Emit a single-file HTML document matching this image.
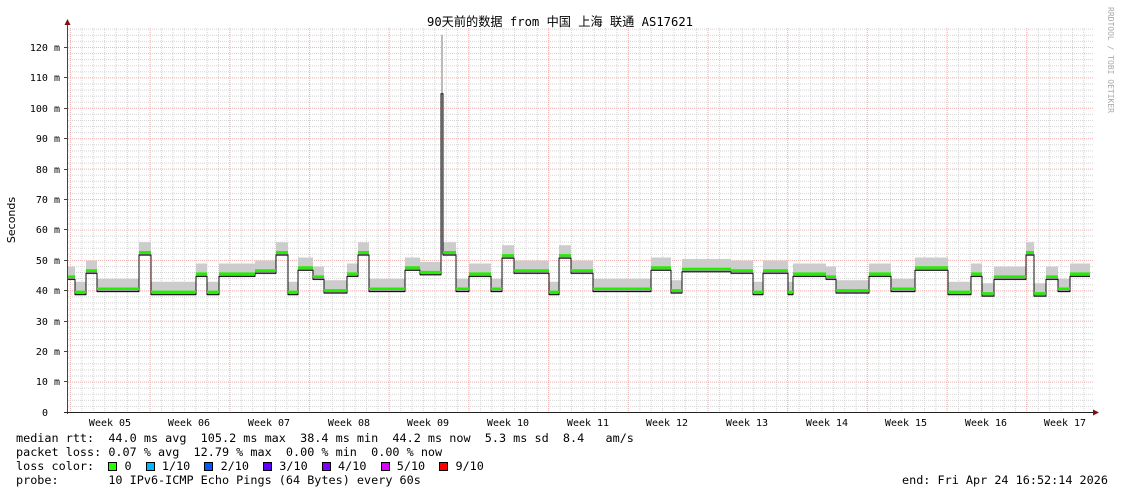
<!DOCTYPE html>
<html><head><meta charset="utf-8">
<style>
html,body{margin:0;padding:0;background:#fff;}
body{width:1121px;height:494px;overflow:hidden;position:relative;}
svg{position:absolute;left:0;top:0;}
.lg{position:absolute;left:16px;font-family:"DejaVu Sans Mono","Liberation Mono",monospace;font-size:11.8px;color:#000;white-space:pre;line-height:14px;}
.sq{display:inline-block;width:7px;height:7px;border:1px solid #000;vertical-align:-1px;}
</style></head><body>
<svg width="1121" height="494" xmlns="http://www.w3.org/2000/svg">
<defs>
<pattern id="vmin" x="70" y="0" width="11.386" height="4" patternUnits="userSpaceOnUse">
<rect x="0" y="0" width="1" height="1" fill="#d4d4d4"/><rect x="0" y="2" width="1" height="1" fill="#d4d4d4"/>
</pattern>
<pattern id="hmin" x="0" y="412" width="4" height="6.084" patternUnits="userSpaceOnUse">
<rect x="0" y="0" width="1" height="1" fill="#d4d4d4"/><rect x="2" y="0" width="1" height="1" fill="#d4d4d4"/>
</pattern>
<pattern id="vmaj" x="69.8" y="0" width="79.7" height="4" patternUnits="userSpaceOnUse">
<rect x="0" y="0" width="1" height="1" fill="#f4b4b4"/><rect x="0" y="2" width="1" height="1" fill="#f4b4b4"/>
</pattern>
<pattern id="hmaj" x="0" y="412" width="4" height="30.42" patternUnits="userSpaceOnUse">
<rect x="0" y="0" width="1" height="1" fill="#f4b4b4"/><rect x="2" y="0" width="1" height="1" fill="#f4b4b4"/>
</pattern>
</defs>
<rect x="68" y="27" width="1025" height="385" fill="url(#vmin)"/>
<rect x="68" y="27" width="1025" height="385" fill="url(#hmin)"/>
<rect x="68" y="27" width="1025" height="385" fill="url(#vmaj)"/>
<rect x="68" y="27" width="1025" height="385" fill="url(#hmaj)"/>
<g transform="translate(0,412) scale(1,-3.042)" fill="none" stroke-linejoin="miter">
<g transform="translate(0,2)">
<path vector-effect="non-scaling-stroke" stroke="#cccccc" stroke-width="11" d="M67,44 H75 M75,39 H86 M86,46 H97 M97,40 H139 M139,52 H151 M151,39 H196 M196,45 H207 M207,39 H219 M219,45 H255 M255,46 H276 M276,52 H288 M288,39 H298 M298,47 H313 M313,44 H324 M324,39.5 H347 M347,45 H358 M358,52 H369 M369,40 H405 M405,47 H420 M420,45.5 H441 M443,52 H456 M456,40 H469 M469,45 H491 M491,40 H502 M502,51 H514 M514,46 H549 M549,39 H559 M559,51 H571 M571,46 H593 M593,40 H651 M651,47 H671 M671,39.5 H682 M682,46.5 H731 M731,46 H753 M753,39 H763 M763,46 H788 M788,39 H793 M793,45 H826 M826,44 H836 M836,39.5 H869 M869,45 H891 M891,40 H915 M915,47 H948 M948,39 H971 M971,45 H982 M982,38.5 H994 M994,44 H1026 M1026,52 H1034 M1034,38.5 H1046 M1046,44 H1058 M1058,40 H1070 M1070,45 H1090"/>
</g>
<path vector-effect="non-scaling-stroke" stroke="#9a9a9a" stroke-width="4" d="M67,44 H75 M75,39 H86 M86,46 H97 M97,40 H139 M139,52 H151 M151,39 H196 M196,45 H207 M207,39 H219 M219,45 H255 M255,46 H276 M276,52 H288 M288,39 H298 M298,47 H313 M313,44 H324 M324,39.5 H347 M347,45 H358 M358,52 H369 M369,40 H405 M405,47 H420 M420,45.5 H441 M443,52 H456 M456,40 H469 M469,45 H491 M491,40 H502 M502,51 H514 M514,46 H549 M549,39 H559 M559,51 H571 M571,46 H593 M593,40 H651 M651,47 H671 M671,39.5 H682 M682,46.5 H731 M731,46 H753 M753,39 H763 M763,46 H788 M788,39 H793 M793,45 H826 M826,44 H836 M836,39.5 H869 M869,45 H891 M891,40 H915 M915,47 H948 M948,39 H971 M971,45 H982 M982,38.5 H994 M994,44 H1026 M1026,52 H1034 M1034,38.5 H1046 M1046,44 H1058 M1058,40 H1070 M1070,45 H1090"/>
<path vector-effect="non-scaling-stroke" stroke="#bbb" stroke-width="2" d="M442,52 V124"/>
<g transform="translate(0,-0.4)">
<path vector-effect="non-scaling-stroke" stroke="#111" stroke-width="1" d="M67,44 H75 V39 H86 V46 H97 V40 H139 V52 H151 V39 H196 V45 H207 V39 H219 V45 H255 V46 H276 V52 H288 V39 H298 V47 H313 V44 H324 V39.5 H347 V45 H358 V52 H369 V40 H405 V47 H420 V45.5 H441 V105 H443 V52 H456 V40 H469 V45 H491 V40 H502 V51 H514 V46 H549 V39 H559 V51 H571 V46 H593 V40 H651 V47 H671 V39.5 H682 V46.5 H731 V46 H753 V39 H763 V46 H788 V39 H793 V45 H826 V44 H836 V39.5 H869 V45 H891 V40 H915 V47 H948 V39 H971 V45 H982 V38.5 H994 V44 H1026 V52 H1034 V38.5 H1046 V44 H1058 V40 H1070 V45 H1090"/>
</g>
<g transform="translate(0,0.5)">
<path vector-effect="non-scaling-stroke" stroke="#22ee00" stroke-width="2.5" d="M67,44 H75 M75,39 H86 M86,46 H97 M97,40 H139 M139,52 H151 M151,39 H196 M196,45 H207 M207,39 H219 M219,45 H255 M255,46 H276 M276,52 H288 M288,39 H298 M298,47 H313 M313,44 H324 M324,39.5 H347 M347,45 H358 M358,52 H369 M369,40 H405 M405,47 H420 M420,45.5 H441 M443,52 H456 M456,40 H469 M469,45 H491 M491,40 H502 M502,51 H514 M514,46 H549 M549,39 H559 M559,51 H571 M571,46 H593 M593,40 H651 M651,47 H671 M671,39.5 H682 M682,46.5 H731 M731,46 H753 M753,39 H763 M763,46 H788 M788,39 H793 M793,45 H826 M826,44 H836 M836,39.5 H869 M869,45 H891 M891,40 H915 M915,47 H948 M948,39 H971 M971,45 H982 M982,38.5 H994 M994,44 H1026 M1026,52 H1034 M1034,38.5 H1046 M1046,44 H1058 M1058,40 H1070 M1070,45 H1090"/>
</g>
</g>
<line x1="67.5" y1="24" x2="67.5" y2="414" stroke="#444" stroke-width="1"/>
<line x1="64" y1="412.5" x2="1094" y2="412.5" stroke="#222" stroke-width="1"/>
<path d="M64.5,25 L67.5,19 L70.5,25 Z" fill="#801010"/>
<path d="M1093,409.5 L1099,412.5 L1093,415.5 Z" fill="#801010"/>
<g stroke="#444" stroke-width="1">
<line x1="64" y1="47.5" x2="67" y2="47.5"/><line x1="64" y1="77.5" x2="67" y2="77.5"/><line x1="64" y1="108.5" x2="67" y2="108.5"/><line x1="64" y1="138.5" x2="67" y2="138.5"/><line x1="64" y1="169.5" x2="67" y2="169.5"/><line x1="64" y1="199.5" x2="67" y2="199.5"/><line x1="64" y1="229.5" x2="67" y2="229.5"/><line x1="64" y1="260.5" x2="67" y2="260.5"/><line x1="64" y1="290.5" x2="67" y2="290.5"/><line x1="64" y1="321.5" x2="67" y2="321.5"/><line x1="64" y1="351.5" x2="67" y2="351.5"/><line x1="64" y1="381.5" x2="67" y2="381.5"/>
</g>
<g font-family="DejaVu Sans Mono, Liberation Mono, monospace" font-size="10" fill="#000" text-anchor="end">
<text x="60" y="51">120 m</text><text x="60" y="81">110 m</text><text x="60" y="112">100 m</text><text x="60" y="142">90 m</text><text x="60" y="173">80 m</text><text x="60" y="203">70 m</text><text x="60" y="233">60 m</text><text x="60" y="264">50 m</text><text x="60" y="294">40 m</text><text x="60" y="325">30 m</text><text x="60" y="355">20 m</text><text x="60" y="385">10 m</text><text x="48" y="416">0</text>
</g>
<g font-family="DejaVu Sans Mono, Liberation Mono, monospace" font-size="10" fill="#000" text-anchor="middle">
<text x="110" y="426">Week 05</text><text x="189" y="426">Week 06</text><text x="269" y="426">Week 07</text><text x="349" y="426">Week 08</text><text x="428" y="426">Week 09</text><text x="508" y="426">Week 10</text><text x="588" y="426">Week 11</text><text x="667" y="426">Week 12</text><text x="747" y="426">Week 13</text><text x="827" y="426">Week 14</text><text x="906" y="426">Week 15</text><text x="986" y="426">Week 16</text><text x="1065" y="426">Week 17</text>
</g>
<text x="560" y="26" text-anchor="middle" textLength="266" lengthAdjust="spacingAndGlyphs" font-family="DejaVu Sans Mono, Noto Sans CJK SC, monospace" font-size="12.5" fill="#000">90天前的数据 from 中国 上海 联通 AS17621</text>
<text transform="translate(15,220) rotate(-90)" text-anchor="middle" font-family="DejaVu Sans, Liberation Sans, sans-serif" font-size="11" fill="#000">Seconds</text>
<text transform="translate(1108,60) rotate(90)" text-anchor="middle" font-family="DejaVu Sans Mono, monospace" font-size="8" fill="#aaa">RRDTOOL / TOBI OETIKER</text>
</svg>
<div class="lg" style="top:431px">median rtt:  44.0 ms avg  105.2 ms max  38.4 ms min  44.2 ms now  5.3 ms sd  8.4   am/s</div>
<div class="lg" style="top:445px">packet loss: 0.07 % avg  12.79 % max  0.00 % min  0.00 % now</div>
<div class="lg" style="top:459px">loss color:  <span class="sq" style="background:#26ff00"></span> 0  <span class="sq" style="background:#00b8ff"></span> 1/10  <span class="sq" style="background:#0059ff"></span> 2/10  <span class="sq" style="background:#5e00ff"></span> 3/10  <span class="sq" style="background:#7e00ff"></span> 4/10  <span class="sq" style="background:#dd00ff"></span> 5/10  <span class="sq" style="background:#ff0000"></span> 9/10</div>
<div class="lg" style="top:473px">probe:       10 IPv6-ICMP Echo Pings (64 Bytes) every 60s</div>
<div class="lg" style="top:473px;left:902px">end: Fri Apr 24 16:52:14 2026</div>
</body></html>
